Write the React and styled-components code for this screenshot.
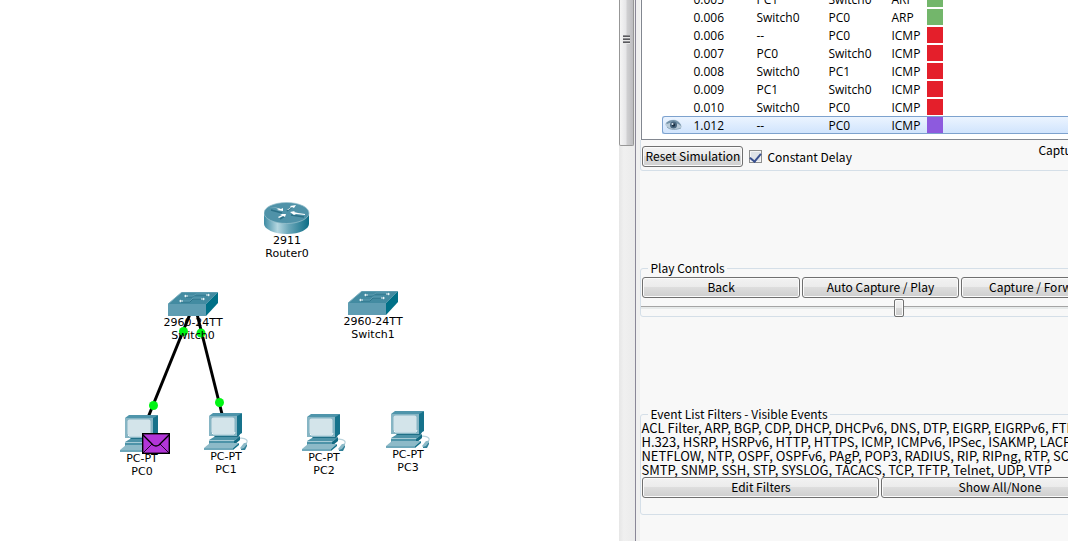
import React from 'react';
import styled, { createGlobalStyle, css } from 'styled-components';

const GlobalStyle = createGlobalStyle`
  * { box-sizing: border-box; }
  body {
    margin: 0;
    background: #fff;
    color: #000;
    font-family: "Noto Sans CJK KR", "Liberation Sans", sans-serif;
    font-size: 12px;
    line-height: 14px;
  }
`;

const Shell = styled.main`
  display: flex;
  min-height: 100vh;
  overflow: hidden;
`;

/* ---------- Topology canvas ---------- */

const Workspace = styled.section`
  position: relative;
  flex: 0 0 58%;
  overflow: hidden;
  background: #fff;
`;

const Links = styled.svg`
  position: absolute;
  left: 0;
  top: 0;
  width: 100%;
  height: 100%;
`;

const Device = styled.figure`
  position: absolute;
  left: ${(p) => p.$x}px;
  top: ${(p) => p.$y}px;
  width: 80px;
  margin: 0;
  display: flex;
  flex-direction: column;
  align-items: center;
  svg { display: block; }
`;

const DeviceLabel = styled.figcaption`
  position: relative;
  z-index: 2;
  font: 11px/13px "DejaVu Sans", sans-serif;
  text-align: center;
  white-space: nowrap;
`;

const Packet = styled.svg`
  position: absolute;
  left: 142px;
  top: 433px;
  z-index: 1;
`;

const PcIcon = () => (
  <svg width="45" height="37" viewBox="0 0 45 37" aria-hidden="true">
    <path d="M33 26c5-2 11 0 10 3-1 2-3 2-4 4" fill="none" stroke="#b9d3dc" strokeWidth="1.3" />
    <path d="M11 21h25l-2 4H10z" fill="#1f6f86" />
    <path d="M5 27l5-3h25l-5 4v3H5z" fill="#4d93a8" />
    <path d="M30 28l6-5v4l-6 5z" fill="#136b83" />
    <path d="M5 27h25v1H5z" fill="#a6cbd6" />
    <path d="M5 3l4-3h29l-4 3z" fill="#4f95ab" />
    <path d="M33 3l5-3v20l-5 3z" fill="#16728b" />
    <path d="M5 3h28v20H5z" fill="#86b5c4" />
    <rect x="7.500" y="4.500" width="23" height="16" rx="2" fill="#d3e4ea" />
    <path d="M8 20l1 1h21l1-2" fill="none" stroke="#f4fafc" />
    <path d="M0 35l6-5h29l-6 5z" fill="#8dbac8" />
    <path d="M0 35h29v2H0z" fill="#6fa8ba" />
    <path d="M29 35l6-5v2l-6 5z" fill="#16728b" />
    <path d="M36 35l4-5h3l-2 6h-4z" fill="#8dbac8" />
    <path d="M37 36l3-1 3-4v2l-2 4h-4z" fill="#2f7f96" />
  </svg>
);

const SwitchIcon = () => (
  <svg width="50" height="24" viewBox="0 0 50 24" aria-hidden="true">
    <path d="M0 12L14 0h36L38 12z" fill="#438ba1" />
    <path d="M0 12h38v12H0z" fill="#5f9db2" />
    <path d="M38 12L50 0v11L38 24z" fill="#007087" />
    <path d="M0 12L14 0h36" fill="none" stroke="#7db0c0" strokeWidth="1" />
    <g fill="none" stroke="#2c7389" strokeWidth="1">
      <path d="M18 5h6l3-2h12M13 10h9l3-3h10" />
    </g>
    <g fill="none" stroke="#5f9db2" strokeWidth="1">
      <path d="M20 4h5l3-2h11M14 9h8l3-3h9" />
    </g>
    <g fill="#eef7fa">
      <path d="M16 4l2-1.500v1h2v1h-2v1zM42 3l-2-1.500v1h-2v1h2v1zM11 9l2-1.500v1h2v1h-2v1zM37 7l-2-1.500v1h-2v1h2v1z" />
    </g>
  </svg>
);

const RouterIcon = () => (
  <svg width="46" height="32" viewBox="0 0 46 32" aria-hidden="true">
    <defs>
      <linearGradient id="routerSide">
        <stop offset="0" stopColor="#3d8ba3" />
        <stop offset="0.3" stopColor="#b4d6e0" />
        <stop offset="0.55" stopColor="#6ba7b9" />
        <stop offset="1" stopColor="#0c6d86" />
      </linearGradient>
    </defs>
    <path d="M0 11v11c0 5 10 10 23 10s22-5 22-10V11z" fill="url(#routerSide)" />
    <ellipse cx="22.500" cy="11" rx="22.500" ry="10.500" fill="#4f92a8" stroke="#9dc4d0" strokeWidth="0.7" />
    <g fill="none" stroke="#2b7188" strokeWidth="1.6">
      <path d="M7 8l11 3M23 9l5-4M21 14l-5 3M27 13l13 2" />
    </g>
    <g fill="#fff">
      <path d="M5 5l9 1 3 1 2-1v3l-6-1 2-1-3-1z" />
      <path d="M23 8l4-3-1-1 6-1-2 3-2-1-4 3z" />
      <path d="M22 12l-1 3-2-1-4 2-1-1 4-2-2-1z" />
      <path d="M26 10l5-1-1 1 4 1 7 1v1l-9-1-2 1z" />
    </g>
  </svg>
);

const devices = [
  { x: 247, y: 202, icon: RouterIcon, model: '2911', name: 'Router0' },
  { x: 153, y: 292, icon: SwitchIcon, model: '2960-24TT', name: 'Switch0' },
  { x: 333, y: 291, icon: SwitchIcon, model: '2960-24TT', name: 'Switch1' },
  { x: 102, y: 415, icon: PcIcon, model: 'PC-PT', name: 'PC0' },
  { x: 186, y: 413, icon: PcIcon, model: 'PC-PT', name: 'PC1' },
  { x: 284, y: 414, icon: PcIcon, model: 'PC-PT', name: 'PC2' },
  { x: 368, y: 411, icon: PcIcon, model: 'PC-PT', name: 'PC3' },
];

/* ---------- Scroll bar between canvas and panel ---------- */

const ScrollTrack = styled.div`
  flex: 0 0 17px;
  background: linear-gradient(to right, #e6e6e6, #f0f0f0 30%, #ebebeb);
  border-right: 1px solid #8a8797;
`;

const ScrollThumb = styled.div`
  width: 15px;
  height: 146px;
  display: flex;
  flex-direction: column;
  align-items: center;
  padding-top: 35px;
  border: 1px solid #979797;
  border-top: 0;
  border-radius: 0 0 2px 2px;
  background: linear-gradient(to right, #f5f5f5, #e6e6e8 45%, #cfcfd1 55%, #bdbdc0);
`;

const GripLine = styled.span`
  width: 7px;
  height: 3px;
  background: #5a5a5e;
  border-top: 1px solid #8e8e92;
  border-bottom: 1px solid #e8e8e8;
`;

/* ---------- Simulation panel ---------- */

const Panel = styled.section`
  flex: 1 1 0;
  min-width: 0;
  overflow: hidden;
  padding-left: 4px;
  background: linear-gradient(to right, #f0f0f0 4px, #f8f8f8 4px);
`;

const PanelBody = styled.div`
  min-width: 480px;
  display: flex;
  flex-direction: column;
  gap: 90px;
`;

const EventList = styled.div`
  height: 140px;
  margin-left: 1px;
  padding: 0 0 5px 20px;
  display: flex;
  flex-direction: column;
  justify-content: flex-end;
  overflow: hidden;
  background: #fff;
  border-left: 1px solid #828790;
  border-bottom: 1px solid #828790;
`;

const EventTable = styled.table`
  flex: none;
  width: 100%;
  table-layout: fixed;
  border-spacing: 0;
  font: 12px/16px "Open Sans", sans-serif;
`;

const EventRow = styled.tr`
  height: 18px;
  ${(p) => p.$selected && css`
    background: linear-gradient(#edf5ff, #cfe3fd);
    border-radius: 3px;
    box-shadow: inset 0 0 0 1px #7da2ce;
  `}
`;

const Cell = styled.td`
  height: 18px;
  padding: ${(p) => (p.$flush ? '0' : '2px 0 0')};
  white-space: nowrap;
  svg { display: block; margin-left: 3px; }
`;

const Col = styled.col`
  width: ${(p) => p.$w}px;
`;

const Swatch = styled.span`
  display: block;
  width: 16px;
  height: 16px;
  background: ${(p) => p.$color};
`;

const EyeIcon = () => (
  <svg width="17" height="12" viewBox="0 0 17 12" aria-label="Visible">
    <path d="M0 5C3 1 7 0 11 1c3 1 5 4 6 7-4 3-13 4-16-1z" fill="#b9cbd9" />
    <path d="M1 4C4 1 9 0 12 2c2 1 4 3 4 5-4-4-10-4-14-2z" fill="#7392a8" />
    <circle cx="8.500" cy="6" r="3.500" fill="#49677f" />
    <circle cx="8.500" cy="6" r="1.700" fill="#1d3346" />
    <circle cx="7.500" cy="5" r="1" fill="#dfeaf2" />
    <path d="M2 8c3 3 9 3 14 1" fill="none" stroke="#8aa5b8" />
  </svg>
);

const GREEN = '#73b66b';
const RED = '#e41f2b';
const PURPLE = '#8d5ade';

const events = [
  ['0.005', 'PC1', 'Switch0', 'ARP', GREEN],
  ['0.006', 'Switch0', 'PC0', 'ARP', GREEN],
  ['0.006', '--', 'PC0', 'ICMP', RED],
  ['0.007', 'PC0', 'Switch0', 'ICMP', RED],
  ['0.008', 'Switch0', 'PC1', 'ICMP', RED],
  ['0.009', 'PC1', 'Switch0', 'ICMP', RED],
  ['0.010', 'Switch0', 'PC0', 'ICMP', RED],
  ['1.012', '--', 'PC0', 'ICMP', PURPLE],
];

const Button = styled.button`
  flex: ${(p) => (p.$grow ? '1 1 0' : 'none')};
  min-width: 101px;
  height: 21px;
  padding: 0 0 2px;
  border: 1px solid #707070;
  border-radius: 3px;
  box-shadow: inset 0 0 0 1px #fbfbfb;
  background: linear-gradient(#f2f2f2, #ebebeb 50%, #dddddd 50%, #cfcfcf);
  color: #000;
  font: inherit;
  white-space: nowrap;
`;

const ButtonRow = styled.div`
  display: flex;
  gap: 2px;
  padding: 0 1px;
`;

const OptionsBar = styled.div`
  display: flex;
  align-items: center;
  height: 31px;
  padding: 3px 1px 0;
  border: 1px solid #d5dfe8;
  border-top: 0;
  border-radius: 0 0 3px 3px;
`;

const CheckLabel = styled.label`
  display: flex;
  align-items: center;
  gap: 5px;
  margin-left: 6px;
`;

const Checkbox = styled.input`
  appearance: none;
  width: 13px;
  height: 13px;
  margin: 0;
  display: flex;
  justify-content: center;
  border: 1px solid #8e8f8f;
  box-shadow: inset 0 0 0 1px #f4f4f4;
  background: #dfe3e8;
  &:checked::after {
    content: "";
    width: 5px;
    height: 9px;
    border: solid #39508f;
    border-width: 0 2px 2px 0;
    transform: rotate(40deg);
  }
`;

const CaptureStatus = styled.output`
  align-self: flex-start;
  width: 80px;
  margin-left: auto;
  white-space: nowrap;
`;

const Group = styled.fieldset`
  min-width: 0;
  margin: 0;
  padding: 0 0 ${(p) => p.$bottom}px;
  border: 1px solid #d5dfe8;
  border-radius: 3px;
`;

const Legend = styled.legend`
  height: 14px;
  margin-left: 7px;
  padding: 0 2px;
`;

const ControlStack = styled.div`
  padding-top: 2px;
`;

const SpeedSlider = styled.input`
  appearance: none;
  display: block;
  width: 100%;
  height: 18px;
  margin: 0;
  background: transparent;
  &::-webkit-slider-runnable-track {
    height: 3px;
    border-top: 1px solid #a4a4a4;
    background: #e7eaea;
  }
  &::-webkit-slider-thumb {
    appearance: none;
    width: 10px;
    height: 18px;
    margin-top: -8px;
    border: 1px solid #707070;
    border-radius: 2px;
    box-shadow: inset 0 0 0 1px #fbfbfb;
    background: linear-gradient(#f2f2f2, #ebebeb 50%, #d8d8d8 50%, #cfcfcf);
  }
`;

const FilterText = styled.p`
  margin: 0;
  font-size: 13px;
  white-space: pre;
`;

const filterLines = [
  'ACL Filter, ARP, BGP, CDP, DHCP, DHCPv6, DNS, DTP, EIGRP, EIGRPv6, FTP,',
  'H.323, HSRP, HSRPv6, HTTP, HTTPS, ICMP, ICMPv6, IPSec, ISAKMP, LACP,',
  'NETFLOW, NTP, OSPF, OSPFv6, PAgP, POP3, RADIUS, RIP, RIPng, RTP, SCCP,',
  'SMTP, SNMP, SSH, STP, SYSLOG, TACACS, TCP, TFTP, Telnet, UDP, VTP',
];

export default function App() {
  return (
    <>
      <GlobalStyle />
      <Shell>
        <Workspace aria-label="Network topology">
          <Links aria-hidden="true">
            <g stroke="#000" strokeWidth="3">
              <path d="M190 314L147 420" />
              <path d="M197 314L223 418" />
            </g>
            <g fill="#00f513">
              <circle cx="183.500" cy="331.500" r="4.500" />
              <circle cx="201" cy="333" r="4.500" />
              <circle cx="153.500" cy="405.500" r="4.500" />
              <circle cx="219.500" cy="402.500" r="4.500" />
            </g>
          </Links>
          {devices.map(({ x, y, icon: Icon, model, name }) => (
            <Device key={name} $x={x} $y={y}>
              <Icon />
              <DeviceLabel>{model}<br />{name}</DeviceLabel>
            </Device>
          ))}
          <Packet width="28" height="21" viewBox="0 0 28 21" aria-label="Packet">
            <rect x="0.700" y="0.700" width="26.600" height="19.600" fill="#b235d8" stroke="#000" strokeWidth="1.400" />
            <path d="M1 2l10 10q3 2 6 0L27 2" fill="none" stroke="#000" strokeWidth="1.400" />
            <path d="M1 20l9-9M27 20l-9-9" stroke="#000" strokeWidth="0.800" />
          </Packet>
        </Workspace>

        <ScrollTrack>
          <ScrollThumb>
            <GripLine /><GripLine /><GripLine />
          </ScrollThumb>
        </ScrollTrack>

        <Panel aria-label="Simulation panel">
          <PanelBody>
            <div>
              <EventList>
                <EventTable>
                  <colgroup>
                    <Col $w={31} /><Col $w={63} /><Col $w={72} /><Col $w={63} /><Col $w={36} /><col />
                  </colgroup>
                  <tbody>
                    {events.map(([time, last, at, type, color], i) => {
                      const selected = i === events.length - 1;
                      return (
                        <EventRow key={i} $selected={selected}>
                          <Cell $flush>{selected && <EyeIcon />}</Cell>
                          <Cell>{time}</Cell>
                          <Cell>{last}</Cell>
                          <Cell>{at}</Cell>
                          <Cell>{type}</Cell>
                          <Cell $flush><Swatch $color={color} /></Cell>
                        </EventRow>
                      );
                    })}
                  </tbody>
                </EventTable>
              </EventList>
              <OptionsBar>
                <Button type="button">Reset Simulation</Button>
                <CheckLabel>
                  <Checkbox type="checkbox" defaultChecked />
                  Constant Delay
                </CheckLabel>
                <CaptureStatus>Captured to:</CaptureStatus>
              </OptionsBar>
            </div>

            <Group $bottom={0}>
              <Legend>Play Controls</Legend>
              <ControlStack>
                <ButtonRow>
                  <Button type="button" $grow>Back</Button>
                  <Button type="button" $grow>Auto Capture / Play</Button>
                  <Button type="button" $grow>Capture / Forward</Button>
                </ButtonRow>
                <SpeedSlider type="range" min="0" max="100" defaultValue="54" aria-label="Play speed" />
              </ControlStack>
            </Group>

            <Group $bottom={16}>
              <Legend>Event List Filters - Visible Events</Legend>
              <FilterText>{filterLines.join('\n')}</FilterText>
              <ButtonRow>
                <Button type="button" $grow>Edit Filters</Button>
                <Button type="button" $grow>Show All/None</Button>
              </ButtonRow>
            </Group>
          </PanelBody>
        </Panel>
      </Shell>
    </>
  );
}
